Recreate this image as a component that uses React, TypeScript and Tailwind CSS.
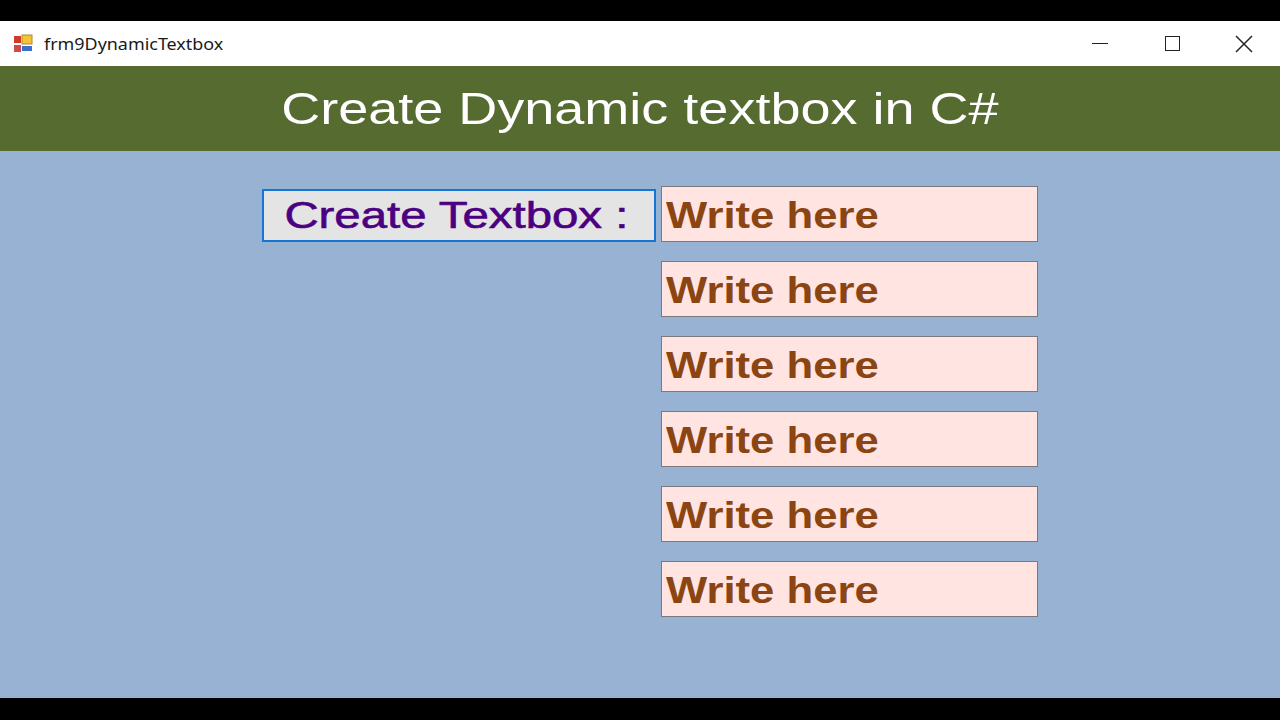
export default function App() {
  const boxes = [0, 1, 2, 3, 4, 5];
  return (
    <div className="w-[1280px] h-[720px] bg-black flex flex-col overflow-hidden" style={{ fontFamily: '"Liberation Sans", Arial, sans-serif' }}>
      <div className="h-[21px]" />
      <div className="h-[45px] bg-white flex items-center">
        <svg width="22" height="22" viewBox="0 0 22 22" className="ml-[12px]">
          <rect x="2" y="3" width="7" height="7" fill="#d13a2a" />
          <rect x="10" y="2" width="10" height="9" fill="#f2c43a" stroke="#b08a20" />
          <rect x="2" y="12" width="7" height="7" fill="#d04848" />
          <rect x="10" y="13" width="10" height="5" fill="#3a6fd0" />
        </svg>
        <span className="ml-[10px] text-[16px] text-[#1a1a1a] inline-block origin-left scale-x-[1.12]" style={{ fontFamily: '"Noto Sans", sans-serif' }}>frm9DynamicTextbox</span>
        <div className="ml-auto flex items-center h-full">
          <div className="w-[72px] flex justify-center"><div className="w-[16px] h-[1.5px] bg-[#222]" /></div>
          <div className="w-[72px] flex justify-center"><div className="w-[15px] h-[15px] border-[1.5px] border-[#222]" /></div>
          <div className="w-[72px] flex justify-center">
            <svg width="18" height="18" viewBox="0 0 18 18"><path d="M1 1L17 17M17 1L1 17" stroke="#222" strokeWidth="1.5" /></svg>
          </div>
        </div>
      </div>
      <div className="h-[85px] bg-[#556b2f] flex items-center justify-center">
        <span className="text-white text-[45px] inline-block scale-x-[1.2]">Create Dynamic textbox in C#</span>
      </div>
      <div className="h-[547px] bg-[#97b2d2] pt-[35px] flex items-start">
        <div className="ml-[262px] mt-[3px] w-[394px] h-[53px] border-2 border-[#1873d3] bg-[#e4e4e4] flex items-center justify-center">
          <span className="text-[#4b0082] text-[37px] leading-none inline-block scale-x-[1.28] ml-[-6px]" style={{ WebkitTextStroke: '0.6px #4b0082' }}>Create Textbox :</span>
        </div>
        <div className="ml-[5px] flex flex-col gap-[19px]">
          {boxes.map((i) => (
            <div key={i} className="w-[377px] h-[56px] bg-[#ffe4e1] border border-[#7a7a7a] flex items-center pl-[4px]">
              <span className="text-[#8b4513] text-[37px] font-bold leading-none inline-block origin-left scale-x-[1.18] mt-[2px]">Write here</span>
            </div>
          ))}
        </div>
      </div>
      <div className="flex-1" />
    </div>
  );
}
